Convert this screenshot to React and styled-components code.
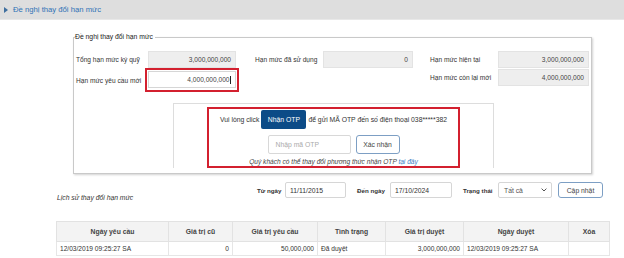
import React from 'react';
import styled, { createGlobalStyle } from 'styled-components';

const GlobalStyle = createGlobalStyle`
  html, body {
    margin: 0;
    padding: 0;
    background: #fff;
    font-family: "Liberation Sans", Arial, sans-serif;
    color: #333;
  }
`;

const Page = styled.div`
  width: 624px;
  height: 258px;
  overflow: hidden;
`;

const HeaderBar = styled.div`
  height: 20px;
  background: #dedede;
  border-bottom: 1px solid #e8e8e8;
  box-sizing: border-box;
  display: flex;
  align-items: center;
  padding-left: 4px;
`;

const Caret = styled.span`
  width: 0;
  height: 0;
  border-top: 3px solid transparent;
  border-bottom: 3px solid transparent;
  border-left: 4px solid #3f6f9f;
  margin-right: 5px;
`;

const HeaderTitle = styled.span`
  font-size: 7.7px;
  color: #2f72b6;
`;

const Fieldset = styled.fieldset`
  margin: 13px 0 0 73px;
  width: 519px;
  box-sizing: border-box;
  border: 1px solid #c9c9c9;
  box-shadow: 1px 1px 2px rgba(0, 0, 0, 0.18);
  padding: 0 0 5px 2px;
  min-width: 0;
`;

const Legend = styled.legend`
  font-size: 6.8px;
  line-height: 8px;
  color: #222;
  padding: 0 2px 0 0;
  margin-left: -1px;
`;

const Row = styled.div`
  display: flex;
  align-items: flex-start;
  margin-top: ${(p) => p.$top || 0}px;
`;

const Group = styled.div`
  display: flex;
  align-items: center;
  margin-left: ${(p) => p.$left || 0}px;
  margin-top: ${(p) => p.$top || 0}px;
`;

const Label = styled.span`
  width: ${(p) => p.$w}px;
  flex: none;
  font-size: 6.6px;
  color: #333;
  white-space: nowrap;
`;

const Field = styled.div`
  width: ${(p) => p.$w}px;
  height: 17px;
  box-sizing: border-box;
  background: ${(p) => (p.$editable ? '#fff' : '#eeeeee')};
  border: 1px solid ${(p) => (p.$editable ? '#d6d6d6' : '#e3e3e3')};
  font-size: 6.6px;
  color: #444;
  display: flex;
  align-items: center;
  justify-content: flex-end;
  padding-right: 4px;
`;

const Cursor = styled.span`
  display: inline-block;
  width: 1px;
  height: 8px;
  background: #222;
  margin-left: 0.5px;
`;

const Highlight = styled.div`
  border: 2px solid #d3202f;
  padding: 1px 1px 2px 1px;
`;

const OtpPanel = styled.div`
  width: 321px;
  box-sizing: border-box;
  margin: 11px 0 0 97px;
  border: 1px solid #dddddd;
  border-bottom: none;
  padding-top: 3px;
  display: flex;
  justify-content: center;
`;

const OtpBox = styled.div`
  width: 253px;
  height: 61px;
  box-sizing: border-box;
  border: 2px solid #d3202f;
  display: flex;
  flex-direction: column;
  align-items: center;
  padding-top: 1px;
`;

const OtpLine = styled.div`
  display: flex;
  align-items: center;
  gap: ${(p) => p.$gap || 0}px;
  margin-top: ${(p) => p.$top || 0}px;
  font-size: 6.8px;
  color: #333;
  white-space: nowrap;
`;

const PrimaryButton = styled.button`
  height: 19px;
  width: 45px;
  border: none;
  border-radius: 2px;
  background: #0c4b87;
  color: #fff;
  font-family: inherit;
  font-size: 6.8px;
  padding: 0;
  margin: 0 2px;
`;

const OtpInput = styled.div`
  width: 83px;
  height: 19px;
  box-sizing: border-box;
  border: 1px solid #d8d8d8;
  border-radius: 2px;
  color: #aaa;
  font-size: 6.8px;
  display: flex;
  align-items: center;
  padding-left: 7px;
`;

const OutlineButton = styled.button`
  width: ${(p) => p.$w}px;
  height: ${(p) => p.$h}px;
  box-sizing: border-box;
  border: 1px solid #7d9fc4;
  border-radius: 3px;
  background: #fff;
  color: #444;
  font-family: inherit;
  font-size: 6.8px;
  padding: 0;
`;

const Note = styled.div`
  margin-top: 4px;
  font-size: 6.6px;
  font-style: italic;
  color: #444;
  white-space: nowrap;
`;

const Link = styled.span`
  color: #3a7cc4;
`;

const FilterBar = styled.div`
  display: flex;
  align-items: flex-start;
  margin-top: 8px;
  padding-left: 57px;
`;

const Caption = styled.div`
  width: 200px;
  flex: none;
  margin-top: 12px;
  font-size: 6.8px;
  font-style: italic;
  color: #333;
`;

const FilterGroup = styled.div`
  display: flex;
  align-items: center;
  margin-left: ${(p) => p.$left || 0}px;
  height: 16px;
`;

const FilterLabel = styled.span`
  width: ${(p) => p.$w}px;
  flex: none;
  font-size: 6.2px;
  font-weight: bold;
  color: #333;
  white-space: nowrap;
`;

const DateInput = styled.div`
  width: ${(p) => p.$w}px;
  height: 16px;
  box-sizing: border-box;
  border: 1px solid #d6d6d6;
  border-radius: 2px;
  font-size: 6.8px;
  color: #333;
  display: flex;
  align-items: center;
  padding-left: 4px;
`;

const Select = styled(DateInput)`
  justify-content: space-between;
  padding: 0 4px 0 5px;
  color: #555;
`;

const TableWrap = styled.div`
  margin: 20px 0 0 56px;
  width: 553px;
`;

const Table = styled.table`
  width: 553px;
  border-collapse: collapse;
  table-layout: fixed;
  font-size: 6.6px;
  color: #333;
`;

const Th = styled.th`
  height: 19px;
  padding: 0;
  background: #f3f3f3;
  border: 1px solid #e2e2e2;
  font-weight: bold;
  font-size: 6.8px;
  color: #444;
  text-align: center;
`;

const Td = styled.td`
  height: 13px;
  padding: 0 3px;
  border: 1px solid #e6e6e6;
  color: #333;
  text-align: ${(p) => p.$align || 'left'};
  white-space: nowrap;
  overflow: hidden;
`;

const Chevron = () => (
  <svg width="6" height="4" viewBox="0 0 6 4">
    <path d="M0.6 0.6 L3 3 L5.4 0.6" fill="none" stroke="#555" strokeWidth="1" />
  </svg>
);

const columns = [
  { title: 'Ngày yêu cầu', w: 112 },
  { title: 'Giá trị cũ', w: 64 },
  { title: 'Giá trị yêu cầu', w: 85 },
  { title: 'Tình trạng', w: 68 },
  { title: 'Giá trị duyệt', w: 78 },
  { title: 'Ngày duyệt', w: 105 },
  { title: 'Xóa', w: 41 },
];

export default function App() {
  return (
    <Page>
      <GlobalStyle />
      <HeaderBar>
        <Caret />
        <HeaderTitle>Đề nghị thay đổi hạn mức</HeaderTitle>
      </HeaderBar>

      <Fieldset>
        <Legend>Đề nghị thay đổi hạn mức</Legend>
        <Row $top={10}>
          <Group>
            <Label $w={72}>Tổng hạn mức ký quỹ</Label>
            <Field $w={88}>3,000,000,000</Field>
          </Group>
          <Group $left={19}>
            <Label $w={68}>Hạn mức đã sử dụng</Label>
            <Field $w={90}>0</Field>
          </Group>
          <Group $left={17}>
            <Label $w={68}>Hạn mức hiện tại</Label>
            <Field $w={91}>3,000,000,000</Field>
          </Group>
        </Row>
        <Row>
          <Group>
            <Label $w={69}>Hạn mức yêu cầu mới</Label>
            <Highlight>
              <Field $w={88} $editable>
                4,000,000,000
                <Cursor />
              </Field>
            </Highlight>
          </Group>
          <Group $left={191} $top={1}>
            <Label $w={68}>Hạn mức còn lại mới</Label>
            <Field $w={91}>4,000,000,000</Field>
          </Group>
        </Row>

        <OtpPanel>
          <OtpBox>
            <OtpLine>
              Vui lòng click
              <PrimaryButton>Nhận OTP</PrimaryButton>
              để gửi MÃ OTP đến số điện thoại 038*****382
            </OtpLine>
            <OtpLine $gap={5} $top={6}>
              <OtpInput>Nhập mã OTP</OtpInput>
              <OutlineButton $w={44} $h={19}>Xác nhận</OutlineButton>
            </OtpLine>
            <Note>
              Quý khách có thể thay đổi phương thức nhận OTP <Link>tại đây</Link>
            </Note>
          </OtpBox>
        </OtpPanel>
      </Fieldset>

      <FilterBar>
        <Caption>Lịch sử thay đổi hạn mức</Caption>
        <FilterGroup>
          <FilterLabel $w={28}>Từ ngày</FilterLabel>
          <DateInput $w={61}>11/11/2015</DateInput>
        </FilterGroup>
        <FilterGroup $left={11}>
          <FilterLabel $w={33}>Đến ngày</FilterLabel>
          <DateInput $w={62}>17/10/2024</DateInput>
        </FilterGroup>
        <FilterGroup $left={11}>
          <FilterLabel $w={35}>Trạng thái</FilterLabel>
          <Select $w={54}>
            <span>Tất cả</span>
            <Chevron />
          </Select>
        </FilterGroup>
        <FilterGroup $left={6}>
          <OutlineButton $w={45} $h={16}>Cập nhật</OutlineButton>
        </FilterGroup>
      </FilterBar>

      <TableWrap>
        <Table>
          <colgroup>
            {columns.map((c) => (
              <col key={c.title} style={{ width: c.w }} />
            ))}
          </colgroup>
          <thead>
            <tr>
              {columns.map((c) => (
                <Th key={c.title}>{c.title}</Th>
              ))}
            </tr>
          </thead>
          <tbody>
            <tr>
              <Td>12/03/2019 09:25:27 SA</Td>
              <Td $align="right">0</Td>
              <Td $align="right">50,000,000</Td>
              <Td>Đã duyệt</Td>
              <Td $align="right">3,000,000,000</Td>
              <Td>12/03/2019 09:25:27 SA</Td>
              <Td />
            </tr>
          </tbody>
        </Table>
      </TableWrap>
    </Page>
  );
}
